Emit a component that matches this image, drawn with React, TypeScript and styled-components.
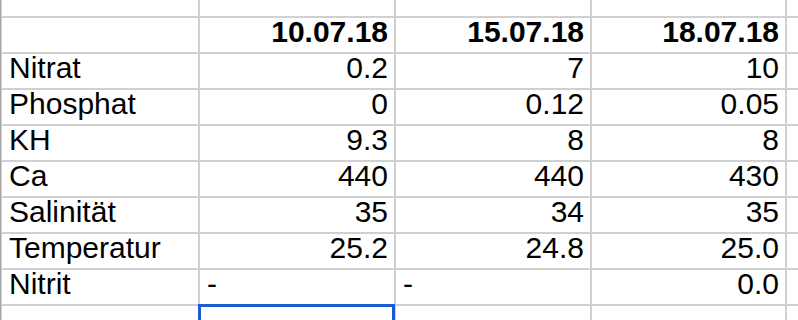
import React from 'react';
import styled, { createGlobalStyle } from 'styled-components';

const GlobalStyle = createGlobalStyle`
  html, body {
    margin: 0;
    padding: 0;
    background: #ffffff;
    overflow: hidden;
  }
`;

const Viewport = styled.div`
  width: 798px;
  height: 320px;
  overflow: hidden;
  background: #ffffff;
`;

const Sheet = styled.div`
  display: grid;
  grid-template-columns: 196px 194px 194px 193px 1fr;
  grid-template-rows: 16px repeat(8, 34px) 34px;
  gap: 2px;
  background: #d0d0d0;
  border-left: 1px solid #a6a6a6;
  padding-left: 1px;
  font-family: "Liberation Sans", Arial, sans-serif;
  font-size: 30px;
  color: #000;
`;

const Cell = styled.div<{ $align?: 'left' | 'right'; $bold?: boolean }>`
  position: relative;
  background: #ffffff;
  display: flex;
  align-items: flex-end;
  justify-content: ${(p) => (p.$align === 'right' ? 'flex-end' : 'flex-start')};
  padding: 0 6px 6px 7px;
  line-height: 28px;
  font-weight: ${(p) => (p.$bold ? 700 : 400)};
  white-space: nowrap;
`;

const Selection = styled.div`
  position: absolute;
  left: -2px;
  top: -2px;
  right: -1px;
  bottom: -6px;
  border: 3px solid #1a5ccf;
  pointer-events: none;
`;

const dates = ['10.07.18', '15.07.18', '18.07.18'];

const rows: [string, string, string, string][] = [
  ['Nitrat', '0.2', '7', '10'],
  ['Phosphat', '0', '0.12', '0.05'],
  ['KH', '9.3', '8', '8'],
  ['Ca', '440', '440', '430'],
  ['Salinität', '35', '34', '35'],
  ['Temperatur', '25.2', '24.8', '25.0'],
  ['Nitrit', '-', '-', '0.0'],
];

const isNumber = (v: string) => /^[0-9.]+$/.test(v);

export default function App() {
  return (
    <Viewport>
      <GlobalStyle />
      <Sheet>
        {Array.from({ length: 5 }).map((_, i) => (
          <Cell key={`top-${i}`} />
        ))}

        <Cell />
        {dates.map((d) => (
          <Cell key={d} $align="right" $bold>
            {d}
          </Cell>
        ))}
        <Cell />

        {rows.map((r) => (
          <React.Fragment key={r[0]}>
            <Cell>{r[0]}</Cell>
            {r.slice(1).map((v, j) => (
              <Cell key={j} $align={isNumber(v) ? 'right' : 'left'}>
                {v}
              </Cell>
            ))}
            <Cell />
          </React.Fragment>
        ))}

        <Cell />
        <Cell>
          <Selection />
        </Cell>
        <Cell />
        <Cell />
        <Cell />
      </Sheet>
    </Viewport>
  );
}
